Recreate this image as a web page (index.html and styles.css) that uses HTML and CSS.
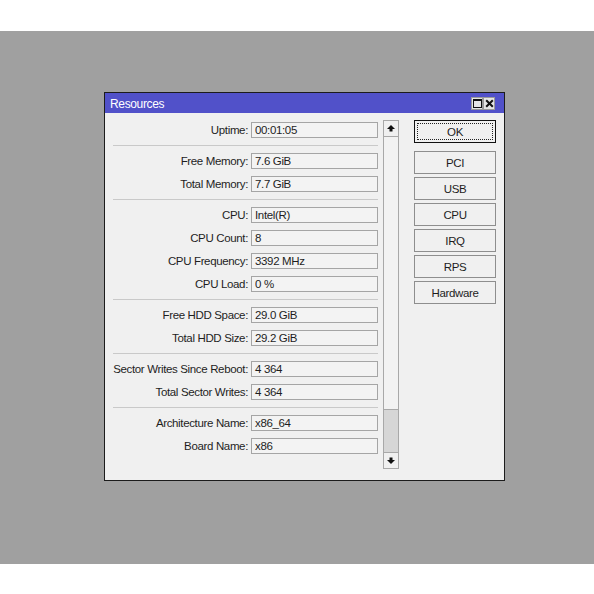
FILE: index.html
```html
<!DOCTYPE html>
<html lang="en">
<head>
    <meta charset="UTF-8">
    <title>Resources</title>
    <link rel="stylesheet" href="styles.css">
</head>
<body>
    <div class="desk">
        <div class="window">
            <div class="titlebar">
                <span class="title">Resources</span>
                <div class="tb-buttons">
                    <span class="tb-btn">
                        <svg width="9" height="9" viewBox="0 0 9 9"><rect x="0.5" y="0.5" width="8" height="8" fill="none" stroke="#111" stroke-width="1"/><rect x="0" y="0" width="9" height="2" fill="#111"/></svg>
                    </span>
                    <span class="tb-btn">
                        <svg width="9" height="9" viewBox="0 0 9 9"><path d="M1.2 1.2 L7.8 7.8 M7.8 1.2 L1.2 7.8" stroke="#111" stroke-width="2"/></svg>
                    </span>
                </div>
            </div>

            <div class="content">
                <div class="form">
                    <div class="group">
                        <div class="row"><span class="label">Uptime:</span><div class="field">00:01:05</div></div>
                    </div>
                    <div class="sep"></div>
                    <div class="group">
                        <div class="row"><span class="label">Free Memory:</span><div class="field">7.6 GiB</div></div>
                        <div class="row"><span class="label">Total Memory:</span><div class="field">7.7 GiB</div></div>
                    </div>
                    <div class="sep"></div>
                    <div class="group">
                        <div class="row"><span class="label">CPU:</span><div class="field">Intel(R)</div></div>
                        <div class="row"><span class="label">CPU Count:</span><div class="field">8</div></div>
                        <div class="row"><span class="label">CPU Frequency:</span><div class="field">3392 MHz</div></div>
                        <div class="row"><span class="label">CPU Load:</span><div class="field">0 %</div></div>
                    </div>
                    <div class="sep"></div>
                    <div class="group">
                        <div class="row"><span class="label">Free HDD Space:</span><div class="field">29.0 GiB</div></div>
                        <div class="row"><span class="label">Total HDD Size:</span><div class="field">29.2 GiB</div></div>
                    </div>
                    <div class="sep"></div>
                    <div class="group">
                        <div class="row"><span class="label">Sector Writes Since Reboot:</span><div class="field">4 364</div></div>
                        <div class="row"><span class="label">Total Sector Writes:</span><div class="field">4 364</div></div>
                    </div>
                    <div class="sep"></div>
                    <div class="group">
                        <div class="row"><span class="label">Architecture Name:</span><div class="field">x86_64</div></div>
                        <div class="row"><span class="label">Board Name:</span><div class="field">x86</div></div>
                    </div>
                </div>

                <div class="scrollbar">
                    <div class="sb-btn">
                        <svg width="8" height="7" viewBox="0 0 8 7"><path d="M4 0 L8 4 L5.5 4 L5.5 6.5 L2.5 6.5 L2.5 4 L0 4 Z" fill="#111"/></svg>
                    </div>
                    <div class="sb-track"></div>
                    <div class="sb-thumb"></div>
                    <div class="sb-btn">
                        <svg width="8" height="7" viewBox="0 0 8 7"><path d="M4 7 L8 3 L5.5 3 L5.5 0.5 L2.5 0.5 L2.5 3 L0 3 Z" fill="#111"/></svg>
                    </div>
                </div>

                <div class="buttons">
                    <button class="btn default">OK</button>
                    <button class="btn">PCI</button>
                    <button class="btn">USB</button>
                    <button class="btn">CPU</button>
                    <button class="btn">IRQ</button>
                    <button class="btn">RPS</button>
                    <button class="btn">Hardware</button>
                </div>
            </div>
        </div>
    </div>
</body>
</html>
```

FILE: styles.css
```css
body {
    margin: 0;
    background: #fff;
    font-family: 'Liberation Sans', Arial, sans-serif;
    font-size: 11.5px;
    letter-spacing: -0.35px;
    color: #1e1e1e;
}
.desk {
    margin-top: 31px;
    height: 533px;
    background: #a0a0a0;
    padding: 61px 0 0 104px;
    box-sizing: border-box;
}
.window {
    width: 401px;
    height: 389px;
    box-sizing: border-box;
    border: 1px solid #1c1c1c;
    background: #f0f0f0;
    display: flex;
    flex-direction: column;
}
.titlebar {
    height: 20px;
    background: #5151c9;
    display: flex;
    align-items: center;
    justify-content: space-between;
    padding: 1px 9px 0 5px;
    box-sizing: border-box;
}
.title {
    color: #fff;
    font-size: 12px;
}
.tb-buttons {
    display: flex;
}
.tb-btn {
    width: 12px;
    height: 13px;
    background: #e6e6e6;
    border: 1px solid #9a9a9a;
    box-sizing: border-box;
    display: flex;
    align-items: center;
    justify-content: center;
}
.content {
    display: flex;
    padding: 7px 8px 0 8px;
}
.form {
    width: 265px;
    margin-top: 2px;
}
.group {
    display: flex;
    flex-direction: column;
    gap: 7px;
}
.row {
    display: flex;
    align-items: center;
    height: 16px;
}
.label {
    width: 135px;
    text-align: right;
    white-space: nowrap;
    margin-right: 3px;
}
.field {
    width: 127px;
    height: 16px;
    box-sizing: border-box;
    border: 1px solid #a5a5a5;
    background: #f3f3f3;
    padding: 0 3px;
    line-height: 14px;
    white-space: nowrap;
    overflow: hidden;
}
.sep {
    height: 1px;
    background: #c9c9c9;
    margin: 7px 0;
}
.scrollbar {
    width: 16px;
    height: 349px;
    margin-left: 5px;
    box-sizing: border-box;
    border: 1px solid #a8a8a8;
    display: flex;
    flex-direction: column;
}
.sb-btn {
    height: 15px;
    background: #f0f0f0;
    display: flex;
    align-items: center;
    justify-content: center;
}
.sb-btn:first-child {
    border-bottom: 1px solid #a8a8a8;
}
.sb-btn:last-child {
    border-top: 1px solid #a8a8a8;
}
.sb-track {
    flex: 1;
    background: #f2f2f2;
}
.sb-thumb {
    height: 42px;
    background: #d6d6d6;
    border-top: 1px solid #a8a8a8;
}
.buttons {
    margin-left: 15px;
    display: flex;
    flex-direction: column;
    gap: 3px;
}
.btn {
    width: 82px;
    height: 23px;
    box-sizing: border-box;
    margin: 0;
    padding: 0;
    border: 1px solid #8e8e8e;
    background: #f0f0f0;
    font-family: 'Liberation Sans', Arial, sans-serif;
    font-size: 11.5px;
    letter-spacing: -0.35px;
    color: #1e1e1e;
}
.btn.default {
    border-color: #111;
    outline: 1px dotted #222;
    outline-offset: -4px;
    margin-bottom: 5px;
}
```
